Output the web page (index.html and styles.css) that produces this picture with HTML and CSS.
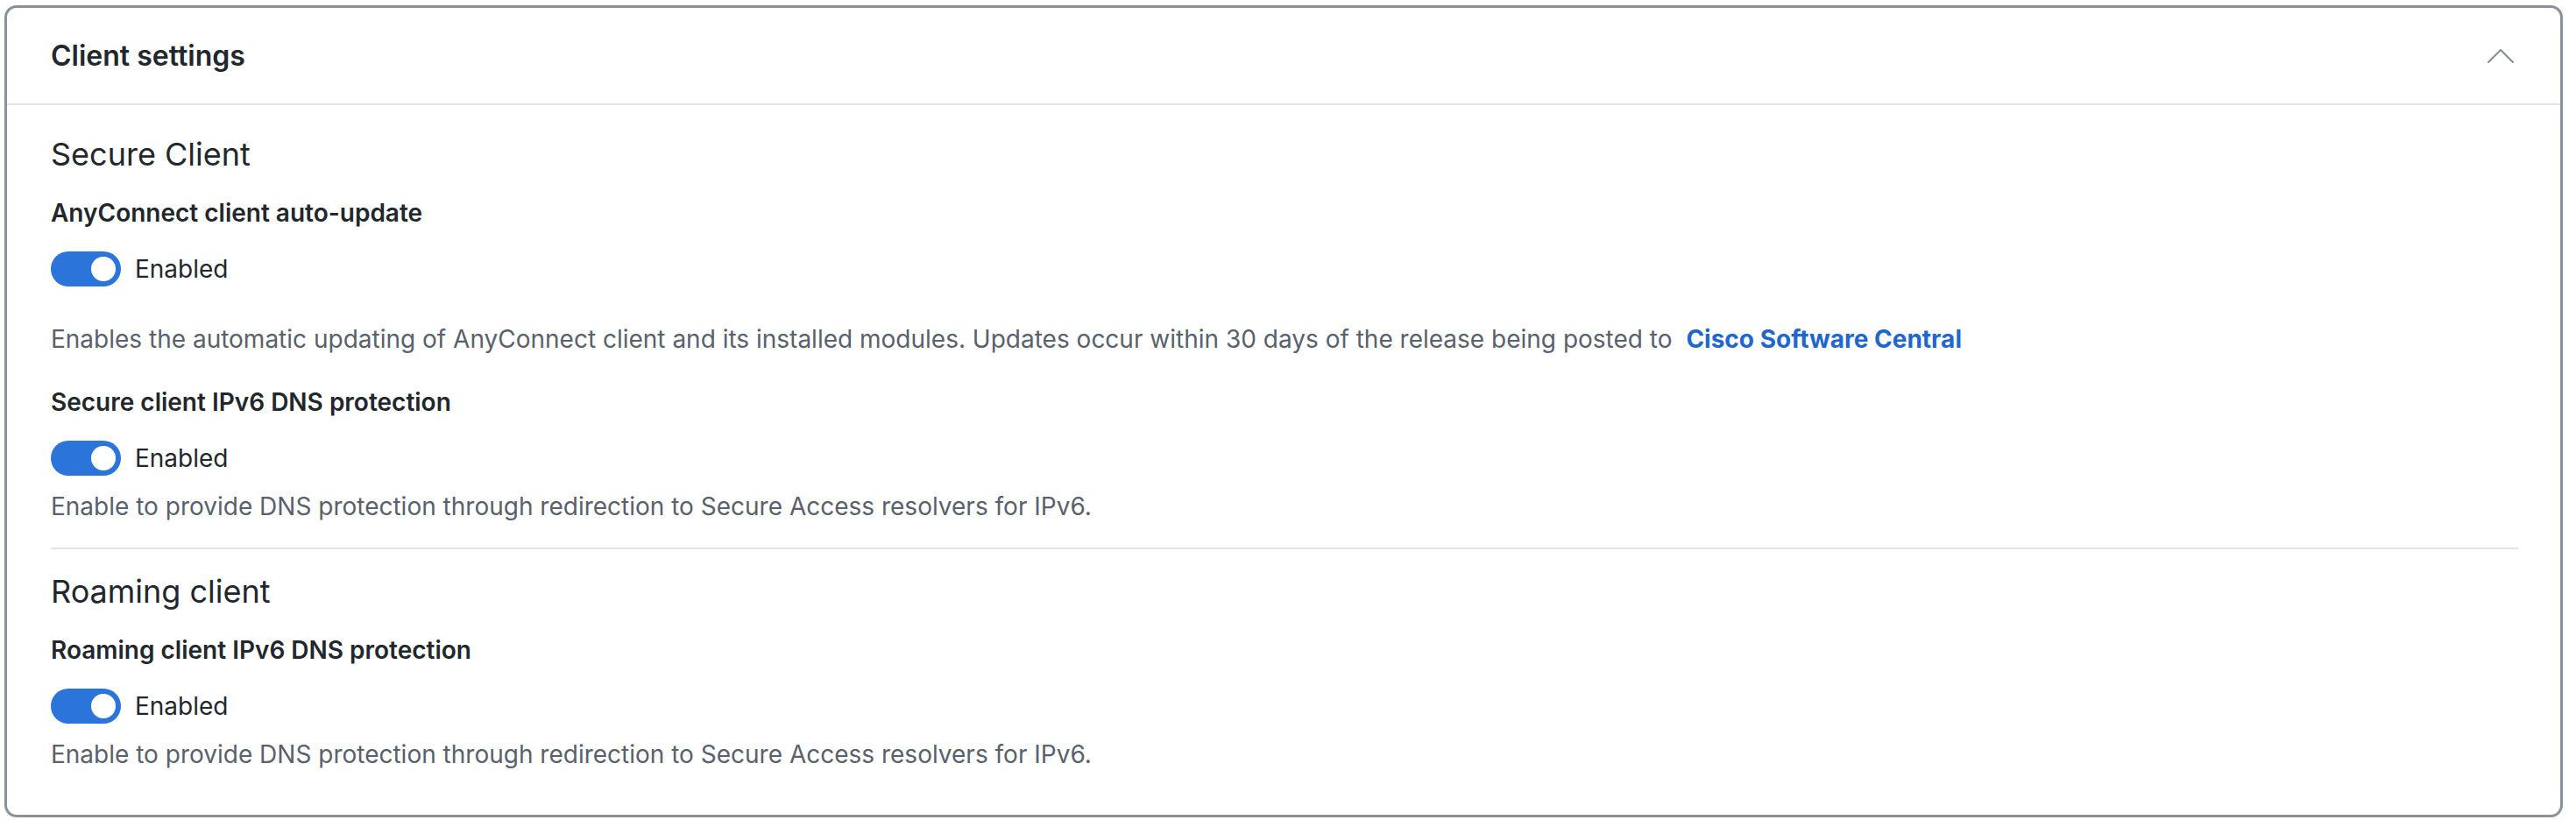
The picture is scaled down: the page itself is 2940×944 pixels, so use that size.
FILE: index.html
```html
<!DOCTYPE html>
<html lang="en">
<head>
<meta charset="utf-8">
<title>Client settings</title>
<link rel="stylesheet" href="styles.css">
</head>
<body>
<div class="page">
  <div class="card">
    <div class="card-header">
      <h2 class="card-title">Client settings</h2>
      <button class="collapse" type="button" aria-label="Collapse">
        <svg width="32" height="18" viewBox="0 0 32 18"><path d="M2 16 L16 2 L30 16" fill="none" stroke="#87909a" stroke-width="2.2" stroke-linecap="round" stroke-linejoin="round"/></svg>
      </button>
    </div>
    <div class="card-body">
      <section class="group">
        <h3 class="group-title">Secure Client</h3>
        <div class="field">
          <div class="field-label">AnyConnect client auto-update</div>
          <label class="switch-row"><span class="switch"><span class="knob"></span></span><span class="switch-text">Enabled</span></label>
          <p class="help help-spaced">Enables the automatic updating of AnyConnect client and its installed modules. Updates occur within 30 days of the release being posted to <a class="link" href="#">Cisco Software Central</a></p>
        </div>
        <div class="field">
          <div class="field-label">Secure client IPv6 DNS protection</div>
          <label class="switch-row"><span class="switch"><span class="knob"></span></span><span class="switch-text">Enabled</span></label>
          <p class="help">Enable to provide DNS protection through redirection to Secure Access resolvers for IPv6.</p>
        </div>
      </section>
      <hr class="divider">
      <section class="group">
        <h3 class="group-title">Roaming client</h3>
        <div class="field">
          <div class="field-label">Roaming client IPv6 DNS protection</div>
          <label class="switch-row"><span class="switch"><span class="knob"></span></span><span class="switch-text">Enabled</span></label>
          <p class="help">Enable to provide DNS protection through redirection to Secure Access resolvers for IPv6.</p>
        </div>
      </section>
    </div>
  </div>
</div>
</body>
</html>
```

FILE: styles.css
```css
* { box-sizing: border-box; }

html, body {
  margin: 0;
  background: #ffffff;
}

body {
  font-family: Inter, "Noto Sans", "Liberation Sans", sans-serif;
  color: #22272d;
}

.page {
  padding: 6px 15px 0 5px;
}

.card {
  border: 3px solid #89929b;
  border-radius: 14px;
  background: #fff;
}

.card-header {
  height: 111px;
  display: flex;
  align-items: center;
  justify-content: space-between;
  padding: 0 52px 0 50px;
  border-bottom: 2px solid #e2e2e7;
}

.card-title {
  margin: 0;
  font-size: 32px;
  line-height: 40px;
  font-weight: 600;
  color: #22272d;
}

.collapse {
  border: 0;
  background: none;
  padding: 0;
  display: flex;
  align-items: center;
  cursor: pointer;
}

.card-body {
  padding: 32px 48px 49px 50px;
}

.group-title {
  margin: 0 0 23px;
  font-size: 36px;
  line-height: 48px;
  font-weight: 400;
  color: #22272d;
}

.field + .field {
  margin-top: 32px;
}

.field-label {
  font-size: 28px;
  line-height: 40px;
  font-weight: 600;
  color: #22272d;
  margin-bottom: 24px;
}

.switch-row {
  display: flex;
  align-items: center;
  gap: 16px;
  height: 40px;
}

.switch {
  width: 80px;
  height: 40px;
  border-radius: 20px;
  background: #2b74da;
  display: flex;
  align-items: center;
  justify-content: flex-end;
  padding-right: 6px;
}

.knob {
  width: 28px;
  height: 28px;
  border-radius: 50%;
  background: #fff;
}

.switch-text {
  font-size: 28px;
  line-height: 40px;
  color: #22272d;
}

.help {
  margin: 15px 0 0;
  font-size: 28px;
  line-height: 40px;
  color: #58616c;
}

.help-spaced {
  margin-top: 40px;
}

.link {
  margin-left: 8px;
  color: #1f66cf;
  font-weight: 700;
  text-decoration: none;
}

.divider {
  border: 0;
  border-top: 2px solid #e2e2e7;
  margin: 27px 0 24px;
}
```
